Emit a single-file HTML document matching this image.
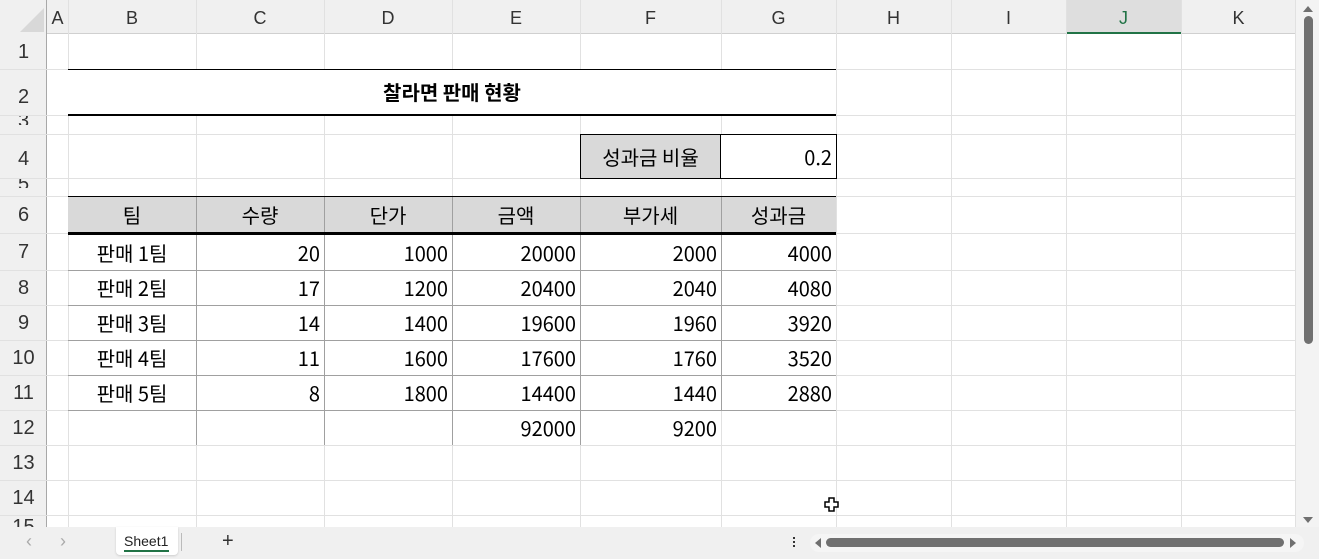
<!DOCTYPE html>
<html><head><meta charset="utf-8"><style>
*{margin:0;padding:0;box-sizing:border-box}
body{width:1319px;height:559px;overflow:hidden;background:#fff;position:relative;font-family:"Liberation Sans","Noto Sans CJK KR",sans-serif}
.a{position:absolute}
.vl{position:absolute;width:1px;background:#e1e1e1}
.hl{position:absolute;height:1px;background:#e1e1e1}
.ch{position:absolute;top:0;height:34px;line-height:36px;text-align:center;font-size:18px;color:#333}
.rh{position:absolute;left:0;width:47px;text-align:center;font-size:20px;color:#333;display:flex;align-items:center;justify-content:center;overflow:hidden}
.t{position:absolute;font-size:20px;color:#000;white-space:nowrap;font-family:"Noto Sans CJK KR",sans-serif;line-height:1;display:flex;align-items:center;overflow:visible}
.r{justify-content:flex-end;padding-right:4px}
.c{justify-content:center}
.g{position:absolute;background:#a0a0a0}
</style></head><body>
<div class="a" style="left:0;top:0;width:1296px;height:34px;background:#f0f0f0;border-bottom:1px solid #d0d0d0"></div>
<div class="a" style="left:0;top:0;width:47px;height:527px;background:#f0f0f0;border-right:1px solid #a8a8a8"></div>
<div class="a" style="left:1066px;top:0;width:115px;height:34px;background:#dedede;border-bottom:2px solid #217346"></div>
<svg class="a" style="left:16px;top:6px" width="28" height="26"><polygon points="28,2 28,26 4,26" fill="#d8d8d8"/></svg>
<div class="ch" style="left:47px;width:21px">A</div>
<div class="ch" style="left:68px;width:128px">B</div>
<div class="ch" style="left:196px;width:128px">C</div>
<div class="ch" style="left:324px;width:128px">D</div>
<div class="ch" style="left:452px;width:128px">E</div>
<div class="ch" style="left:580px;width:141px">F</div>
<div class="ch" style="left:721px;width:115px">G</div>
<div class="ch" style="left:836px;width:115px">H</div>
<div class="ch" style="left:951px;width:115px">I</div>
<div class="ch" style="left:1066px;width:115px;color:#217346">J</div>
<div class="ch" style="left:1181px;width:115px">K</div>
<div class="vl" style="left:68px;top:0;height:527px"></div>
<div class="vl" style="left:196px;top:0;height:527px"></div>
<div class="vl" style="left:324px;top:0;height:527px"></div>
<div class="vl" style="left:452px;top:0;height:527px"></div>
<div class="vl" style="left:580px;top:0;height:527px"></div>
<div class="vl" style="left:721px;top:0;height:527px"></div>
<div class="vl" style="left:836px;top:0;height:527px"></div>
<div class="vl" style="left:951px;top:0;height:527px"></div>
<div class="vl" style="left:1066px;top:0;height:527px"></div>
<div class="vl" style="left:1181px;top:0;height:527px"></div>
<div class="vl" style="left:1295px;top:0;height:527px"></div>
<div class="hl" style="left:0;top:69px;width:1296px"></div>
<div class="hl" style="left:0;top:115px;width:1296px"></div>
<div class="hl" style="left:0;top:134px;width:1296px"></div>
<div class="hl" style="left:0;top:178px;width:1296px"></div>
<div class="hl" style="left:0;top:196px;width:1296px"></div>
<div class="hl" style="left:0;top:233px;width:1296px"></div>
<div class="hl" style="left:0;top:270px;width:1296px"></div>
<div class="hl" style="left:0;top:305px;width:1296px"></div>
<div class="hl" style="left:0;top:340px;width:1296px"></div>
<div class="hl" style="left:0;top:375px;width:1296px"></div>
<div class="hl" style="left:0;top:410px;width:1296px"></div>
<div class="hl" style="left:0;top:445px;width:1296px"></div>
<div class="hl" style="left:0;top:480px;width:1296px"></div>
<div class="hl" style="left:0;top:515px;width:1296px"></div>
<div class="rh" style="top:35px;height:34px">1</div>
<div class="rh" style="top:80px;height:35px">2</div>
<div class="rh" style="top:116px;height:9px;align-items:flex-start"><span style="margin-top:-6px">3</span></div>
<div class="rh" style="top:140px;height:38px">4</div>
<div class="rh" style="top:179px;height:9px;align-items:flex-start"><span style="margin-top:-6px">5</span></div>
<div class="rh" style="top:197px;height:36px">6</div>
<div class="rh" style="top:234px;height:36px">7</div>
<div class="rh" style="top:271px;height:34px">8</div>
<div class="rh" style="top:306px;height:34px">9</div>
<div class="rh" style="top:341px;height:34px">10</div>
<div class="rh" style="top:376px;height:34px">11</div>
<div class="rh" style="top:411px;height:34px">12</div>
<div class="rh" style="top:446px;height:34px">13</div>
<div class="rh" style="top:481px;height:34px">14</div>
<div class="rh" style="top:516px;height:11px;align-items:flex-start"><span>15</span></div>
<div class="a" style="left:68px;top:69px;width:768px;height:47px;background:#fff;border-top:1px solid #000;border-bottom:2px solid #000"></div>
<div class="t c" style="left:68px;top:70px;width:768px;height:44px;font-weight:bold">찰라면 판매 현황</div>
<div class="a" style="left:580px;top:134px;width:257px;height:45px;border:1px solid #000;background:#fff"></div>
<div class="a" style="left:581px;top:135px;width:140px;height:43px;background:#d9d9d9;border-right:1px solid #000"></div>
<div class="t c" style="left:580px;top:135px;width:141px;height:43px">성과금 비율</div>
<div class="t r" style="left:721px;top:135px;width:115px;height:43px">0.2</div>
<div class="a" style="left:68px;top:196px;width:768px;height:39px;background:#d9d9d9;border-top:1px solid #000;border-bottom:3px solid #000"></div>
<div class="g" style="left:196px;top:197px;width:1px;height:248px"></div>
<div class="g" style="left:324px;top:197px;width:1px;height:248px"></div>
<div class="g" style="left:452px;top:197px;width:1px;height:248px"></div>
<div class="g" style="left:580px;top:197px;width:1px;height:248px"></div>
<div class="g" style="left:721px;top:197px;width:1px;height:213px"></div>
<div class="a" style="left:68px;top:232px;width:768px;height:3px;background:#000"></div>
<div class="g" style="left:68px;top:270px;width:768px;height:1px"></div>
<div class="g" style="left:68px;top:305px;width:768px;height:1px"></div>
<div class="g" style="left:68px;top:340px;width:768px;height:1px"></div>
<div class="g" style="left:68px;top:375px;width:768px;height:1px"></div>
<div class="g" style="left:68px;top:410px;width:768px;height:1px"></div>
<div class="t c" style="left:68px;top:197px;width:128px;height:35px">팀</div>
<div class="t c" style="left:196px;top:197px;width:128px;height:35px">수량</div>
<div class="t c" style="left:324px;top:197px;width:128px;height:35px">단가</div>
<div class="t c" style="left:452px;top:197px;width:128px;height:35px">금액</div>
<div class="t c" style="left:580px;top:197px;width:141px;height:35px">부가세</div>
<div class="t c" style="left:721px;top:197px;width:115px;height:35px">성과금</div>
<div class="t c" style="left:68px;top:235px;width:128px;height:35px">판매 1팀</div>
<div class="t r" style="left:196px;top:235px;width:128px;height:35px">20</div>
<div class="t r" style="left:324px;top:235px;width:128px;height:35px">1000</div>
<div class="t r" style="left:452px;top:235px;width:128px;height:35px">20000</div>
<div class="t r" style="left:580px;top:235px;width:141px;height:35px">2000</div>
<div class="t r" style="left:721px;top:235px;width:115px;height:35px">4000</div>
<div class="t c" style="left:68px;top:271px;width:128px;height:34px">판매 2팀</div>
<div class="t r" style="left:196px;top:271px;width:128px;height:34px">17</div>
<div class="t r" style="left:324px;top:271px;width:128px;height:34px">1200</div>
<div class="t r" style="left:452px;top:271px;width:128px;height:34px">20400</div>
<div class="t r" style="left:580px;top:271px;width:141px;height:34px">2040</div>
<div class="t r" style="left:721px;top:271px;width:115px;height:34px">4080</div>
<div class="t c" style="left:68px;top:306px;width:128px;height:34px">판매 3팀</div>
<div class="t r" style="left:196px;top:306px;width:128px;height:34px">14</div>
<div class="t r" style="left:324px;top:306px;width:128px;height:34px">1400</div>
<div class="t r" style="left:452px;top:306px;width:128px;height:34px">19600</div>
<div class="t r" style="left:580px;top:306px;width:141px;height:34px">1960</div>
<div class="t r" style="left:721px;top:306px;width:115px;height:34px">3920</div>
<div class="t c" style="left:68px;top:341px;width:128px;height:34px">판매 4팀</div>
<div class="t r" style="left:196px;top:341px;width:128px;height:34px">11</div>
<div class="t r" style="left:324px;top:341px;width:128px;height:34px">1600</div>
<div class="t r" style="left:452px;top:341px;width:128px;height:34px">17600</div>
<div class="t r" style="left:580px;top:341px;width:141px;height:34px">1760</div>
<div class="t r" style="left:721px;top:341px;width:115px;height:34px">3520</div>
<div class="t c" style="left:68px;top:376px;width:128px;height:34px">판매 5팀</div>
<div class="t r" style="left:196px;top:376px;width:128px;height:34px">8</div>
<div class="t r" style="left:324px;top:376px;width:128px;height:34px">1800</div>
<div class="t r" style="left:452px;top:376px;width:128px;height:34px">14400</div>
<div class="t r" style="left:580px;top:376px;width:141px;height:34px">1440</div>
<div class="t r" style="left:721px;top:376px;width:115px;height:34px">2880</div>
<div class="t r" style="left:452px;top:411px;width:128px;height:34px">92000</div>
<div class="t r" style="left:580px;top:411px;width:141px;height:34px">9200</div>
<svg class="a" style="left:824px;top:497px" width="16" height="16"><path d="M5 1h5v4h4v5h-4v4H5v-4H1V5h4z" fill="#fff" stroke="#000" stroke-width="1.5"/></svg>
<div class="a" style="left:1296px;top:0;width:23px;height:527px;background:#f3f3f3"></div>
<svg class="a" style="left:1302px;top:4px" width="12" height="10"><polygon points="1,8 6,2 11,8" fill="#707070"/></svg>
<div class="a" style="left:1304px;top:16px;width:9px;height:328px;background:#707070;border-radius:5px"></div>
<svg class="a" style="left:1302px;top:515px" width="12" height="10"><polygon points="1,2 11,2 6,8" fill="#707070"/></svg>
<div class="a" style="left:0;top:527px;width:1319px;height:32px;background:#f0f0f0"></div>
<div class="a" style="left:26px;top:531px;font-size:18px;color:#aaa">&#8249;</div>
<div class="a" style="left:60px;top:531px;font-size:18px;color:#aaa">&#8250;</div>
<div class="a" style="left:116px;top:527px;width:62px;height:28px;background:#fff;border-radius:0 0 4px 4px;box-shadow:0 1px 2px #ccc"></div>
<div class="a" style="left:124px;top:533px;font-size:14px;color:#222">Sheet1</div>
<div class="a" style="left:124px;top:550px;width:45px;height:2px;background:#217346"></div>
<div class="a" style="left:181px;top:533px;width:1px;height:18px;background:#bbb"></div>
<div class="a" style="left:222px;top:530px;font-size:20px;color:#333">+</div>
<div class="a" style="left:793px;top:537px;width:2px;height:2px;background:#333;box-shadow:0 4px 0 #333,0 8px 0 #333"></div>
<div class="a" style="left:810px;top:534px;width:494px;height:18px;background:#f5f5f5;border-radius:9px"></div>
<svg class="a" style="left:813px;top:537px" width="10" height="12"><polygon points="8,1 8,11 2,6" fill="#707070"/></svg>
<div class="a" style="left:826px;top:538px;width:458px;height:9px;background:#707070;border-radius:5px"></div>
<svg class="a" style="left:1288px;top:537px" width="10" height="12"><polygon points="2,1 2,11 8,6" fill="#707070"/></svg>
</body></html>
